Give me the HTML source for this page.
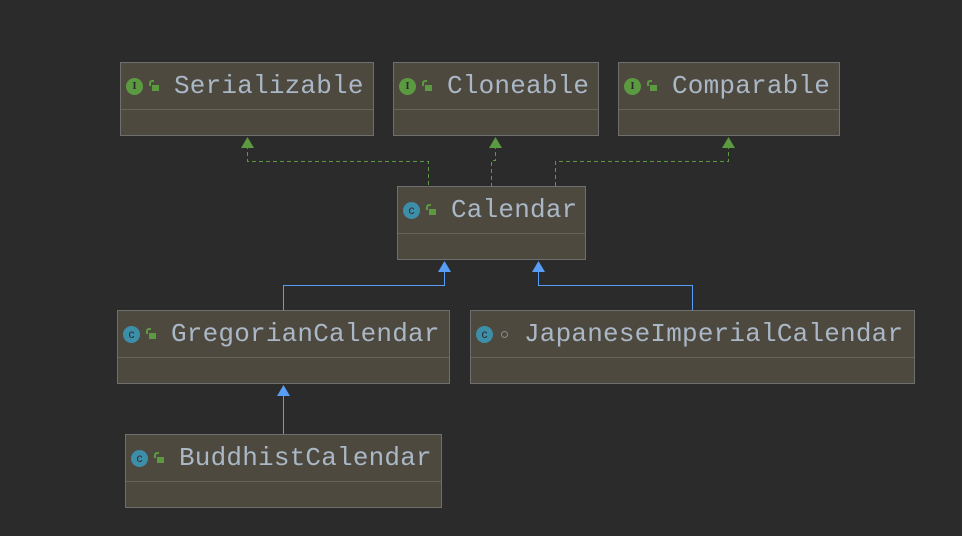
<!DOCTYPE html><html><head><style>
body{margin:0;width:962px;height:536px;background:#2b2b2b;position:relative;overflow:hidden;font-family:"Liberation Mono",monospace}
.b{position:absolute;background:#4e493e;border:1px solid #6f6f6f;box-sizing:border-box;height:74px}
.b .h{height:46px;border-bottom:1px solid #676359;position:relative}
.b .t{position:absolute;left:53px;top:9px;font-size:26px;color:#a9b7c6;line-height:28px;white-space:nowrap;letter-spacing:0.2px}
.ic{position:absolute;left:5px;top:15px;width:17px;height:17px;border-radius:50%;font:bold 11px "Liberation Serif",serif;text-align:center;line-height:17px;color:#2b2b2b}
.I{background:#5b9a41}.C{background:#3d8ea8;font-family:"Liberation Sans",sans-serif;font-weight:normal;font-size:12px}
.lk{position:absolute;left:31px;top:22px;width:7px;height:6px;background:#5b9a41}
.lk:before{content:"";position:absolute;left:-3px;top:-5px;width:5px;height:6px;border:2px solid #5b9a41;border-bottom:none;border-right:none;border-radius:3px 0 0 0;box-sizing:border-box}
.dot{position:absolute;left:30px;top:20px;width:7px;height:7px;border:1.5px solid #8a8a8a;border-radius:50%;box-sizing:border-box}
</style></head><body>
<svg width="962" height="536" style="position:absolute;left:0;top:0">
<g stroke="#5b9a41" fill="none" stroke-dasharray="4,3">
<path d="M247.5 145V161.5H428.5V186"/><path d="M495.5 145V160.5H491.5V186"/><path d="M728.5 145V161.5H555.5V186"/></g>
<g fill="#5b9a41"><path d="M241 148L247.5 137L254 148Z"/><path d="M489 148L495.5 137L502 148Z"/><path d="M722 148L728.5 137L735 148Z"/></g>
<g stroke="#589df6" fill="none"><path d="M444.5 268V285.5H283.5V310"/><path d="M538.5 268V285.5H692.5V310"/><path d="M283.5 392V434"/></g>
<g fill="#589df6"><path d="M438 272L444.5 261L451 272Z"/><path d="M532 272L538.5 261L545 272Z"/><path d="M277 396L283.5 385L290 396Z"/></g>
</svg>
<div class="b" style="left:120px;top:62px;width:254px"><div class="h"><div class="ic I">I</div><div class="lk"></div><div class="t">Serializable</div></div></div>
<div class="b" style="left:393px;top:62px;width:206px"><div class="h"><div class="ic I">I</div><div class="lk"></div><div class="t">Cloneable</div></div></div>
<div class="b" style="left:618px;top:62px;width:222px"><div class="h"><div class="ic I">I</div><div class="lk"></div><div class="t">Comparable</div></div></div>
<div class="b" style="left:397px;top:186px;width:189px"><div class="h"><div class="ic C">c</div><div class="lk"></div><div class="t">Calendar</div></div></div>
<div class="b" style="left:117px;top:310px;width:333px"><div class="h"><div class="ic C">c</div><div class="lk"></div><div class="t">GregorianCalendar</div></div></div>
<div class="b" style="left:470px;top:310px;width:445px"><div class="h"><div class="ic C">c</div><div class="dot"></div><div class="t">JapaneseImperialCalendar</div></div></div>
<div class="b" style="left:125px;top:434px;width:317px"><div class="h"><div class="ic C">c</div><div class="lk"></div><div class="t">BuddhistCalendar</div></div></div>
</body></html>
